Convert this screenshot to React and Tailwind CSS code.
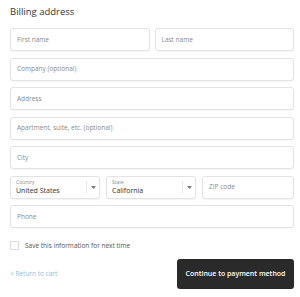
import React from 'react';

const Field = ({ placeholder, className = '' }) => (
  <div
    className={`h-[23px] flex items-center px-[6px] bg-white border border-[#e3e3e3] rounded-[3px] shadow-[0_1px_1px_rgba(0,0,0,0.04)] ${className}`}
  >
    <span className="text-[6.5px] text-[#8a8a8a]">{placeholder}</span>
  </div>
);

const Select = ({ label, value, className = '' }) => (
  <div
    className={`h-[23px] flex items-center bg-white border border-[#e3e3e3] rounded-[3px] shadow-[0_1px_1px_rgba(0,0,0,0.04)] ${className}`}
  >
    <div className="flex-1 flex flex-col pl-[5px] leading-none">
      <span className="text-[5px] text-[#8a8a8a]">{label}</span>
      <span className="text-[7px] text-[#333] mt-[2px]">{value}</span>
    </div>
    <div className="w-px h-[11px] bg-[#e3e3e3]" />
    <div className="w-[12px] flex items-center justify-center">
      <svg width="5" height="3" viewBox="0 0 5 3">
        <path d="M0 0 L5 0 L2.5 3 Z" fill="#777" />
      </svg>
    </div>
  </div>
);

export default function App() {
  return (
    <div
      className="w-[300px] h-[297px] bg-white pl-[10px] pr-[6px] pt-[5px]"
      style={{ fontFamily: '"Open Sans", "Noto Sans", sans-serif' }}
    >
      <h2 className="text-[9.5px] text-[#333] leading-[14px]">Billing address</h2>

      <div className="mt-[9px] flex flex-col gap-[6.5px]">
        <div className="flex gap-[5px]">
          <Field placeholder="First name" className="flex-1" />
          <Field placeholder="Last name" className="flex-1" />
        </div>
        <Field placeholder="Company (optional)" />
        <Field placeholder="Address" />
        <Field placeholder="Apartment, suite, etc. (optional)" />
        <Field placeholder="City" />
        <div className="flex gap-[6px]">
          <Select label="Country" value="United States" className="w-[90px]" />
          <Select label="State" value="California" className="w-[90px]" />
          <Field placeholder="ZIP code" className="flex-1" />
        </div>
        <Field placeholder="Phone" />
      </div>

      <label className="mt-[13px] flex items-center gap-[6px]">
        <span className="w-[9px] h-[9px] border border-[#d9d9d9] rounded-[1px] bg-white" />
        <span className="text-[6.5px] text-[#545454]">Save this information for next time</span>
      </label>

      <div className="mt-[8px] flex items-center justify-between">
        <a className="text-[6.5px] text-[#8fc1dc]">&lt; Return to cart</a>
        <button className="w-[117px] h-[30px] rounded-[3px] bg-[#2a2a2a] text-white text-[7px] font-semibold">
          Continue to payment method
        </button>
      </div>
    </div>
  );
}
